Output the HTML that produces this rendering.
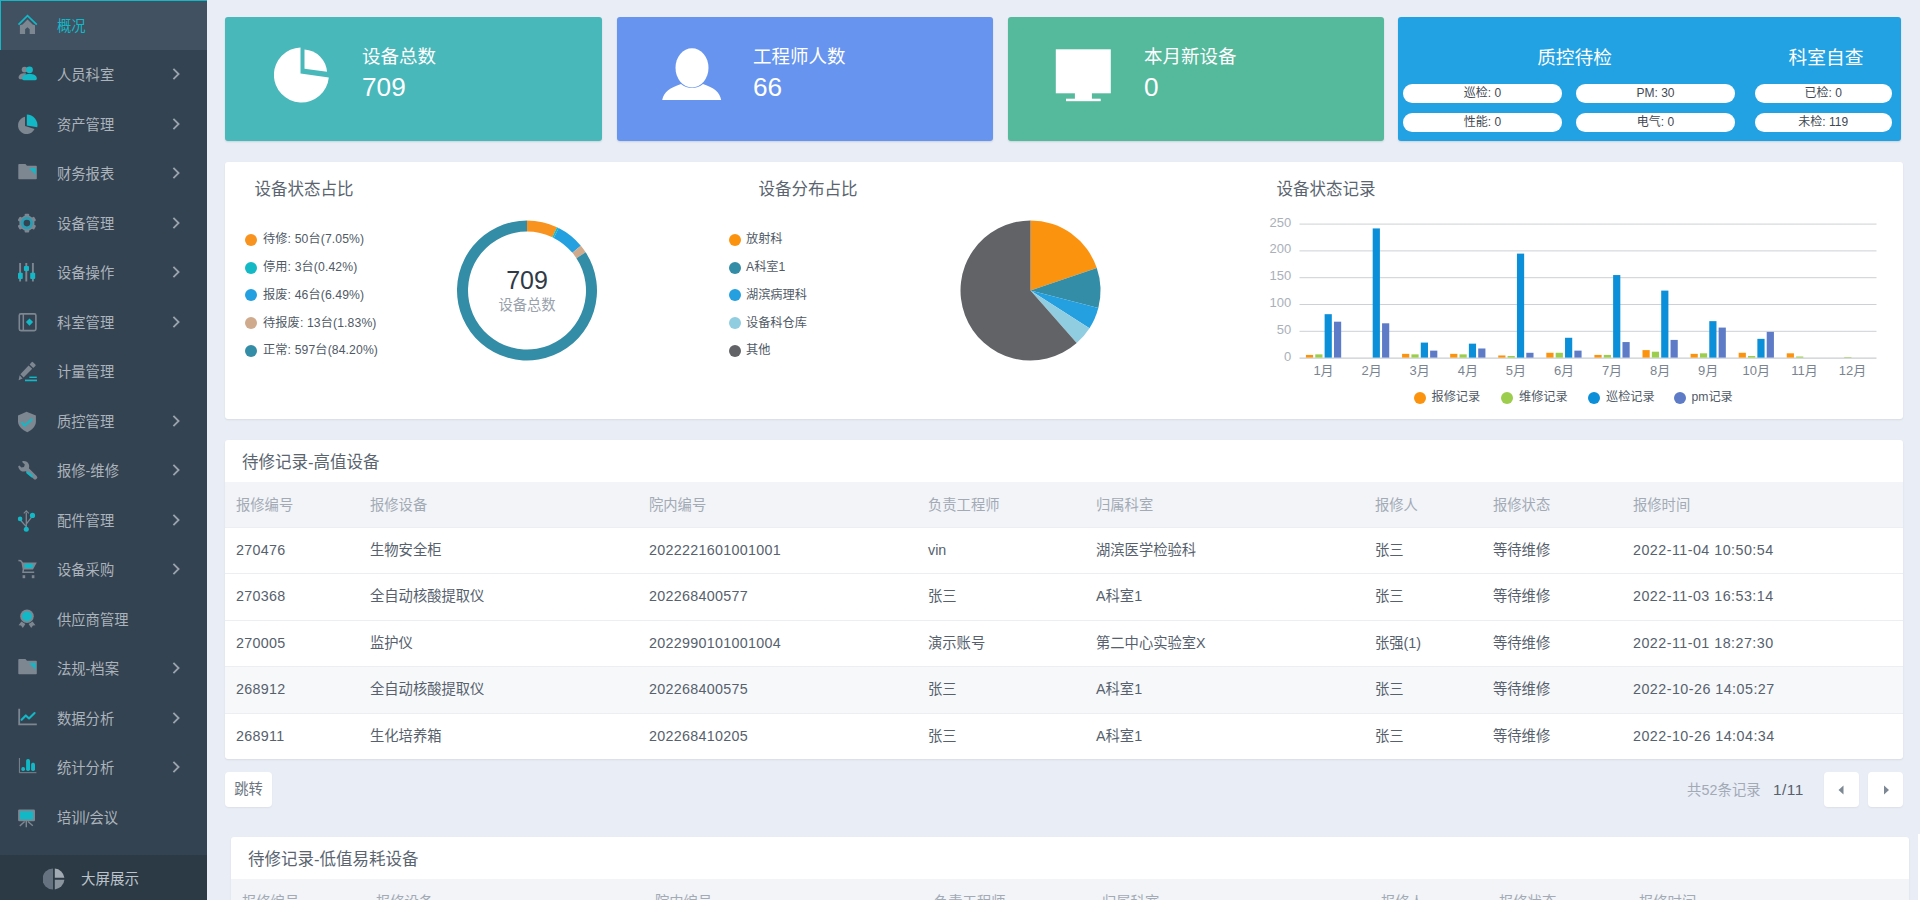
<!DOCTYPE html>
<html lang="zh-CN"><head><meta charset="utf-8"><title>概况</title>
<style>
*{box-sizing:border-box;margin:0;padding:0}
html,body{width:1920px;height:900px;overflow:hidden}
body{background:#e9edf6;font-family:"Liberation Sans","Noto Sans CJK SC",sans-serif;color:#4a5560;position:relative}
#side{position:absolute;left:0;top:0;width:207px;height:900px;background:#344351}
.it{position:absolute;left:0;width:207px;color:#abb3bc;font-size:14.3px;white-space:nowrap}
.it span{position:absolute;left:57px;top:1px}
.it .ic{position:absolute;left:18px;top:14px;overflow:visible}
.it .ar{position:absolute;left:171px;top:50%;margin-top:-7.5px}
.it.act{background:#425161;border-top:1px solid #12b8c6;border-left:1px solid #12b8c6;color:#12b8c6}
.it.act span{left:56px;top:-0.5px}
.it.act .ic{left:17px;top:14px}
#sbot{position:absolute;left:0;top:854.5px;width:207px;height:46px;background:#2c3a45;color:#bcc3ca;font-size:14.5px;line-height:49.4px}
#sbot span{position:absolute;left:81px;top:0}
#sbot svg{position:absolute;left:43.4px;top:13.8px}
.card{position:absolute;top:17px;height:124px;border-radius:3px;color:#fff;box-shadow:0 1px 2px rgba(0,0,0,.12)}
.card .t{position:absolute;left:137px;top:27px;font-size:18.5px;line-height:26px;white-space:nowrap}
.card .n{position:absolute;left:137px;top:53px;font-size:26.2px;line-height:34px}
.panel{position:absolute;background:#fff;border-radius:3px;box-shadow:0 1px 2px rgba(0,0,0,.08)}
.ptitle{position:absolute;font-size:16.5px;color:#5a6570;line-height:22px;white-space:nowrap}
.lg{position:absolute;font-size:12.2px;color:#4f5a66;line-height:16px;white-space:nowrap}
.lgn{letter-spacing:0.12px}
.lg i{position:absolute;left:-18px;top:2.5px;width:12px;height:12px;border-radius:50%}
.ax{font-size:13px;fill:#a9b0b9;font-family:"Liberation Sans","Noto Sans CJK SC",sans-serif}
.ax2{font-size:13px;fill:#7a8490;font-family:"Liberation Sans","Noto Sans CJK SC",sans-serif}
.pill{position:absolute;height:18.5px;border-radius:9.25px;background:#fff;color:#3f4953;font-size:12px;line-height:18px;text-align:center;white-space:nowrap}
.th{position:absolute;left:0;top:42px;width:100%;height:45px;background:#f2f4f7;color:#a2aab6;font-size:14.3px;line-height:47.5px}
.th span,.tr span{position:absolute;top:0;white-space:nowrap}
.tr{position:absolute;left:0;width:100%;height:46.4px;line-height:44px;font-size:14.3px;color:#56616d;border-top:1px solid #eceef2}
.nm{letter-spacing:0.3px}.dt{letter-spacing:0.47px}
.tr.hov{background:#f7f8fa}
.btn{position:absolute;background:#fff;border-radius:4px;box-shadow:0 1px 2px rgba(0,0,0,.06)}
</style></head><body>
<div id="side">
<div class="it act" style="top:0.0px;height:50px;line-height:50px"><svg class="ic" width="22" height="22" viewBox="0 0 22 22"><path d="M4.6 9.6 L9.5 4.6 L14.6 9.6 L17 10.2 V19.1 H11.7 V14.2 L9.4 12.2 L7.1 14.2 V19.1 H1.9 V10.2 Z" fill="#7d8792"/><path d="M0.5 9.6 L9.5 0.6 L18.8 9.6" fill="none" stroke="#12b8c6" stroke-width="1.7" stroke-linejoin="miter"/></svg><span>概况</span></div>
<div class="it" style="top:50.0px;height:49.5px;line-height:49.5px"><svg class="ic" width="22" height="22" viewBox="0 0 22 22"><circle cx="6.6" cy="5.6" r="2.9" fill="#7d8792"/><path d="M0.6 13.6 C0.6 10.6 3.4 9.2 6.6 9.2 L8 9.2 L6 15.2 H2 C1 15.2 0.6 14.4 0.6 13.6 Z" fill="#7d8792"/><circle cx="11.5" cy="5.8" r="3.4" fill="#12b8c6"/><path d="M4.2 14.6 C4.2 11.4 7.4 10 11.5 10 C15.6 10 18.8 11.4 18.8 14.6 C18.8 15.6 18.2 16.2 17.2 16.2 H5.8 C4.8 16.2 4.2 15.6 4.2 14.6 Z" fill="#12b8c6"/></svg><span>人员科室</span><svg class="ar" width="10" height="14" viewBox="0 0 10 14"><path d="M2.4 1.8 L7.6 7 L2.4 12.2" fill="none" stroke="#9aa3ad" stroke-width="1.8"/></svg></div>
<div class="it" style="top:99.5px;height:49.5px;line-height:49.5px"><svg class="ic" width="22" height="22" viewBox="0 0 22 22"><path d="M7 2.87 A8.7 8.7 0 1 0 16.56 15.12 L7 11.9 Z" fill="#7d8792"/><path d="M8.8 0.4 A11 11 0 0 1 19.3 13.3 L8.8 11.5 Z" fill="#12b8c6"/></svg><span>资产管理</span><svg class="ar" width="10" height="14" viewBox="0 0 10 14"><path d="M2.4 1.8 L7.6 7 L2.4 12.2" fill="none" stroke="#9aa3ad" stroke-width="1.8"/></svg></div>
<div class="it" style="top:149.0px;height:49.5px;line-height:49.5px"><svg class="ic" width="22" height="22" viewBox="0 0 22 22"><path d="M1.1 1 H7.4 L9 2.8 H18 Q18.8 2.8 18.8 3.6 V15.4 Q18.8 16.2 18 16.2 H1.1 Q0.3 16.2 0.3 15.4 V1.8 Q0.3 1 1.1 1 Z" fill="#7d8792"/><path d="M11 5 H17.6 V11.4 Z" fill="#12b8c6"/></svg><span>财务报表</span><svg class="ar" width="10" height="14" viewBox="0 0 10 14"><path d="M2.4 1.8 L7.6 7 L2.4 12.2" fill="none" stroke="#9aa3ad" stroke-width="1.8"/></svg></div>
<div class="it" style="top:198.5px;height:49.5px;line-height:49.5px"><svg class="ic" width="22" height="22" viewBox="0 0 22 22"><g transform="translate(8.9 10.1)"><g fill="#7d8792"><rect x="-2.3" y="-9.4" width="4.6" height="18.8" rx="1"/><rect x="-2.3" y="-9.4" width="4.6" height="18.8" rx="1" transform="rotate(60)"/><rect x="-2.3" y="-9.4" width="4.6" height="18.8" rx="1" transform="rotate(120)"/><circle r="7.6"/></g><circle r="6.3" fill="#2b9db3"/><circle r="3.3" fill="#344351"/></g></svg><span>设备管理</span><svg class="ar" width="10" height="14" viewBox="0 0 10 14"><path d="M2.4 1.8 L7.6 7 L2.4 12.2" fill="none" stroke="#9aa3ad" stroke-width="1.8"/></svg></div>
<div class="it" style="top:248.0px;height:49.5px;line-height:49.5px"><svg class="ic" width="22" height="22" viewBox="0 0 22 22"><path d="M2.1 0.9 V19.5 M8.3 0.9 V19.5 M14.9 0.9 V19.5" stroke="#7d8792" stroke-width="1.9" fill="none"/><rect x="0" y="10.8" width="4.8" height="6.1" rx="1" fill="#12b8c6"/><rect x="5.9" y="3.9" width="5.1" height="5.2" rx="1" fill="#12b8c6"/><rect x="12.2" y="10.8" width="5" height="6.1" rx="1" fill="#12b8c6"/></svg><span>设备操作</span><svg class="ar" width="10" height="14" viewBox="0 0 10 14"><path d="M2.4 1.8 L7.6 7 L2.4 12.2" fill="none" stroke="#9aa3ad" stroke-width="1.8"/></svg></div>
<div class="it" style="top:297.5px;height:49.5px;line-height:49.5px"><svg class="ic" width="22" height="22" viewBox="0 0 22 22"><rect x="1.3" y="1.9" width="16.6" height="16.7" rx="1.6" fill="none" stroke="#7d8792" stroke-width="1.6"/><path d="M5.3 1.9 V18.6" stroke="#7d8792" stroke-width="1.5"/><path d="M11.5 6.4 L15.1 10.1 L11.5 13.8 L7.9 10.1 Z" fill="#12b8c6"/></svg><span>科室管理</span><svg class="ar" width="10" height="14" viewBox="0 0 10 14"><path d="M2.4 1.8 L7.6 7 L2.4 12.2" fill="none" stroke="#9aa3ad" stroke-width="1.8"/></svg></div>
<div class="it" style="top:347.0px;height:49.5px;line-height:49.5px"><svg class="ic" width="22" height="22" viewBox="0 0 22 22"><path d="M0.6 19.2 L1.6 14.2 L4.6 17.4 Z" fill="#7d8792"/><path d="M2.4 13.2 L10.6 4.4 L14.2 7.8 L5.6 16.6 Z" fill="#7d8792"/><path d="M11.6 3.4 L13.6 1.2 Q14.3 0.5 15 1.2 L17.4 3.5 Q18 4.2 17.4 4.9 L15.2 7 Z" fill="#7d8792"/><path d="M11.3 16.3 H18.8" stroke="#12b8c6" stroke-width="1.4"/><path d="M7 19.4 H19" stroke="#12b8c6" stroke-width="1.7"/></svg><span>计量管理</span></div>
<div class="it" style="top:396.5px;height:49.5px;line-height:49.5px"><svg class="ic" width="22" height="22" viewBox="0 0 22 22"><path d="M8.6 0.7 L17.9 4.4 V10.6 C17.9 15.2 14.2 19 9.3 21.3 C4.2 19 0 15.2 0 10.6 V4.4 Z" fill="#7d8792"/><path d="M3.4 11.2 L6.6 14.6 L14.4 8" stroke="#12b8c6" stroke-width="2" fill="none"/></svg><span>质控管理</span><svg class="ar" width="10" height="14" viewBox="0 0 10 14"><path d="M2.4 1.8 L7.6 7 L2.4 12.2" fill="none" stroke="#9aa3ad" stroke-width="1.8"/></svg></div>
<div class="it" style="top:446.0px;height:49.5px;line-height:49.5px"><svg class="ic" width="22" height="22" viewBox="0 0 22 22"><path d="M8.6 9 L17.2 17.4" stroke="#7d8792" stroke-width="4.2" stroke-linecap="round"/><path d="M4.2 1.2 C6.8 0.4 9.6 1.6 10.8 4.2 C11.8 6.6 11 9.4 9 10.8 C7 12 4.2 11.8 2.4 10.4 C1.2 9.4 0.4 7.8 0.2 6.2 L1.4 5.4 L3.4 7.6 L6 7 L6.8 4.6 L4.6 2.6 Z" fill="#7d8792"/><path d="M9.4 12.6 L14 16.2" stroke="#12b8c6" stroke-width="2.4" stroke-linecap="round"/></svg><span>报修-维修</span><svg class="ar" width="10" height="14" viewBox="0 0 10 14"><path d="M2.4 1.8 L7.6 7 L2.4 12.2" fill="none" stroke="#9aa3ad" stroke-width="1.8"/></svg></div>
<div class="it" style="top:495.5px;height:49.5px;line-height:49.5px"><svg class="ic" width="22" height="22" viewBox="0 0 22 22"><path d="M8.3 2.5 V17 M2.4 10 L8 16.4 M14.2 6.4 L8.6 13.6" stroke="#7d8792" stroke-width="1.3" fill="none"/><path d="M5.8 3.4 L8.3 0.9 L10.8 3.4" stroke="#7d8792" stroke-width="1.1" fill="none"/><circle cx="2.1" cy="8.9" r="2.3" fill="#12b8c6"/><circle cx="14.5" cy="5.4" r="2.6" fill="#12b8c6"/><circle cx="8.3" cy="19.2" r="2.5" fill="#12b8c6"/></svg><span>配件管理</span><svg class="ar" width="10" height="14" viewBox="0 0 10 14"><path d="M2.4 1.8 L7.6 7 L2.4 12.2" fill="none" stroke="#9aa3ad" stroke-width="1.8"/></svg></div>
<div class="it" style="top:545.0px;height:49.5px;line-height:49.5px"><svg class="ic" width="22" height="22" viewBox="0 0 22 22"><path d="M0.4 1.4 L2.6 1.8 L4.2 3.6 L5.4 10.2 L5 13.2 H16.2" stroke="#7d8792" stroke-width="1.5" fill="none"/><path d="M4.2 3.4 H18.8 L15 10.4 H5.4 Z" fill="#7d8792"/><rect x="6.6" y="4.8" width="8.4" height="4.1" rx="0.8" fill="#12b8c6"/><rect x="4.6" y="16.2" width="2.6" height="3" fill="#7d8792"/><rect x="13.8" y="16.2" width="2.6" height="3" fill="#7d8792"/></svg><span>设备采购</span><svg class="ar" width="10" height="14" viewBox="0 0 10 14"><path d="M2.4 1.8 L7.6 7 L2.4 12.2" fill="none" stroke="#9aa3ad" stroke-width="1.8"/></svg></div>
<div class="it" style="top:594.5px;height:49.5px;line-height:49.5px"><svg class="ic" width="22" height="22" viewBox="0 0 22 22"><path d="M3.4 12.6 L0.6 16.3 L3 16.6 L4.8 18.9 L7.4 15 Z" fill="#7d8792"/><path d="M14.6 12.6 L17.4 16.3 L15 16.6 L13.2 18.9 L10.6 15 Z" fill="#7d8792"/><circle cx="9" cy="7.3" r="6.8" fill="#7d8792"/><circle cx="9" cy="7.3" r="4.9" fill="#12b8c6"/></svg><span>供应商管理</span></div>
<div class="it" style="top:644.0px;height:49.5px;line-height:49.5px"><svg class="ic" width="22" height="22" viewBox="0 0 22 22"><path d="M1.1 1 H7.4 L9 2.8 H18 Q18.8 2.8 18.8 3.6 V15.4 Q18.8 16.2 18 16.2 H1.1 Q0.3 16.2 0.3 15.4 V1.8 Q0.3 1 1.1 1 Z" fill="#7d8792"/><path d="M11 5 H17.6 V11.4 Z" fill="#12b8c6"/></svg><span>法规-档案</span><svg class="ar" width="10" height="14" viewBox="0 0 10 14"><path d="M2.4 1.8 L7.6 7 L2.4 12.2" fill="none" stroke="#9aa3ad" stroke-width="1.8"/></svg></div>
<div class="it" style="top:693.5px;height:49.5px;line-height:49.5px"><svg class="ic" width="22" height="22" viewBox="0 0 22 22"><path d="M1.2 0.7 V16.3 H18.8" stroke="#7d8792" stroke-width="1.8" fill="none"/><path d="M3.6 11.8 L7.8 7.4 L11 10.4 L16.6 5" stroke="#12b8c6" stroke-width="2.1" fill="none" stroke-linecap="round" stroke-linejoin="round"/></svg><span>数据分析</span><svg class="ar" width="10" height="14" viewBox="0 0 10 14"><path d="M2.4 1.8 L7.6 7 L2.4 12.2" fill="none" stroke="#9aa3ad" stroke-width="1.8"/></svg></div>
<div class="it" style="top:743.0px;height:49.5px;line-height:49.5px"><svg class="ic" width="22" height="22" viewBox="0 0 22 22"><path d="M1.4 1 V15.7 H18.4" stroke="#7d8792" stroke-width="1" fill="none"/><rect x="3.3" y="10.1" width="3.7" height="3.8" rx="1.6" fill="#12b8c6"/><rect x="8.1" y="2.1" width="3.9" height="11.8" rx="1.7" fill="#12b8c6"/><rect x="13.1" y="5.7" width="3.9" height="8.2" rx="1.7" fill="#12b8c6"/></svg><span>统计分析</span><svg class="ar" width="10" height="14" viewBox="0 0 10 14"><path d="M2.4 1.8 L7.6 7 L2.4 12.2" fill="none" stroke="#9aa3ad" stroke-width="1.8"/></svg></div>
<div class="it" style="top:792.5px;height:49.5px;line-height:49.5px"><svg class="ic" width="22" height="22" viewBox="0 0 22 22"><rect x="0.1" y="2.5" width="16.9" height="11.7" rx="1.2" fill="#7d8792"/><rect x="1.9" y="4.3" width="13.3" height="8.3" rx="0.8" fill="#12b8c6"/><path d="M8.3 14 V20.2 M6.6 14.4 L1.8 19 M10 14.4 L14.8 18.8" stroke="#7d8792" stroke-width="1.4" fill="none"/></svg><span>培训/会议</span></div>
<div id="sbot"><svg width="22" height="22" viewBox="0 0 22 22"><path d="M10 0.5 A10.5 10.5 0 0 0 10 21.5 Z" fill="#66727f"/><path d="M11.8 0.6 A10.5 10.5 0 0 1 21.4 9.8 H11.8 Z" fill="#a2aab3"/><path d="M11.8 11.8 H21.4 A10.5 10.5 0 0 1 11.8 21.4 Z" fill="#8a949f"/></svg><span>大屏展示</span></div>
</div>

<div class="card" style="left:225px;width:376.5px;background:#48b8ba">
<svg style="position:absolute;left:49px;top:28.5px" width="58" height="58" viewBox="0 0 58 58"><path d="M26.5 1.5 A27.5 27.5 0 1 0 54.8 31.5 L26.5 27.5 Z" fill="#fff"/><path d="M30.5 3.5 A24 24 0 0 1 53 25.8 L30.5 22.8 Z" fill="#fff"/></svg>
<div class="t">设备总数</div><div class="n">709</div></div>

<div class="card" style="left:617px;width:375.5px;background:#6794ee">
<svg style="position:absolute;left:43.5px;top:30px" width="62" height="54" viewBox="0 0 62 54"><ellipse cx="31" cy="20.8" rx="16.5" ry="19.6" fill="#fff"/><path d="M1.2 53 C3 44.5 9 41 20 37 C26 42.3 36 42.3 42 37 C53 41 58.5 44.5 60.2 53 Z" fill="#fff"/></svg>
<div class="t" style="left:136px">工程师人数</div><div class="n" style="left:136px">66</div></div>

<div class="card" style="left:1008px;width:375.5px;background:#55b99c">
<svg style="position:absolute;left:47px;top:31px" width="58" height="54" viewBox="0 0 58 54"><rect x="0.8" y="1.3" width="55" height="44" fill="#fff"/><rect x="19.9" y="45" width="17" height="6" fill="#fff"/><rect x="11" y="50.7" width="34.7" height="2.5" fill="#fff"/></svg>
<div class="t" style="left:136px">本月新设备</div><div class="n" style="left:136px">0</div></div>

<div class="card" style="left:1398px;width:503px;background:#22a2e3">
<div style="position:absolute;left:139.2px;top:28px;font-size:18.7px;line-height:26px">质控待检</div>
<div style="position:absolute;left:390.6px;top:28px;font-size:18.7px;line-height:26px">科室自查</div>
<div class="pill" style="left:5px;top:67px;width:159px">巡检: 0</div>
<div class="pill" style="left:178px;top:67px;width:159px">PM: 30</div>
<div class="pill" style="left:357px;top:67px;width:136.5px">已检: 0</div>
<div class="pill" style="left:5px;top:96px;width:159px">性能: 0</div>
<div class="pill" style="left:178px;top:96px;width:159px">电气: 0</div>
<div class="pill" style="left:357px;top:96px;width:136.5px">未检: 119</div>
</div>

<div class="panel" style="left:225px;top:162px;width:1678px;height:257px"></div>
<div class="ptitle" style="left:254.5px;top:178px">设备状态占比</div>
<div class="ptitle" style="left:758.5px;top:178px">设备分布占比</div>
<div class="ptitle" style="left:1276.5px;top:178px">设备状态记录</div>

<div class="lg lgn" style="left:263px;top:231px"><i style="background:#f7931e"></i>待修: 50台(7.05%)</div>
<div class="lg lgn" style="left:263px;top:259px"><i style="background:#13b9c4"></i>停用: 3台(0.42%)</div>
<div class="lg lgn" style="left:263px;top:286.5px"><i style="background:#24a0e0"></i>报废: 46台(6.49%)</div>
<div class="lg lgn" style="left:263px;top:314.5px"><i style="background:#d0aa8c"></i>待报废: 13台(1.83%)</div>
<div class="lg lgn" style="left:263px;top:342px"><i style="background:#348da6"></i>正常: 597台(84.20%)</div>

<div class="lg" style="left:746px;top:231px"><i style="left:-17px;background:#fc930f"></i>放射科</div>
<div class="lg" style="left:746px;top:259px"><i style="left:-17px;background:#348da6"></i>A科室1</div>
<div class="lg" style="left:746px;top:286.5px"><i style="left:-17px;background:#24a0e0"></i>湖滨病理科</div>
<div class="lg" style="left:746px;top:314.5px"><i style="left:-17px;background:#90cde0"></i>设备科仓库</div>
<div class="lg" style="left:746px;top:342px"><i style="left:-17px;background:#626366"></i>其他</div>

<svg style="position:absolute;left:0;top:0;pointer-events:none" width="1920" height="900" viewBox="0 0 1920 900">
<path d="M527.00,220.50 A70,70 0 0 1 557.01,227.26 L552.30,237.20 A59,59 0 0 0 527.00,231.50 Z" fill="#f7931e"/><path d="M557.01,227.26 A70,70 0 0 1 558.68,228.08 L553.70,237.89 A59,59 0 0 0 552.30,237.20 Z" fill="#13b9c4"/><path d="M558.68,228.08 A70,70 0 0 1 580.83,245.76 L572.37,252.79 A59,59 0 0 0 553.70,237.89 Z" fill="#24a0e0"/><path d="M580.83,245.76 A70,70 0 0 1 585.62,252.24 L576.41,258.25 A59,59 0 0 0 572.37,252.79 Z" fill="#d0aa8c"/><path d="M585.62,252.24 A70,70 0 1 1 527.00,220.50 L527.00,231.50 A59,59 0 1 0 576.41,258.25 Z" fill="#348da6"/>
<path d="M1030.50,290.50 L1030.50,220.50 A70,70 0 0 1 1096.80,268.06 Z" fill="#fc930f"/><path d="M1030.50,290.50 L1096.80,268.06 A70,70 0 0 1 1098.30,307.91 Z" fill="#348da6"/><path d="M1030.50,290.50 L1098.30,307.91 A70,70 0 0 1 1089.47,328.21 Z" fill="#24a0e0"/><path d="M1030.50,290.50 L1089.47,328.21 A70,70 0 0 1 1076.70,343.09 Z" fill="#90cde0"/><path d="M1030.50,290.50 L1076.70,343.09 A70,70 0 1 1 1030.50,220.50 Z" fill="#626366"/>
<line x1="1299.5" x2="1876.5" y1="358.1" y2="358.1" stroke="#bcc1c7" stroke-width="1"/><text x="1291.3" y="360.6" text-anchor="end" class="ax">0</text><line x1="1299.5" x2="1876.5" y1="331.3" y2="331.3" stroke="#cdd0d4" stroke-width="1"/><text x="1291.3" y="333.8" text-anchor="end" class="ax">50</text><line x1="1299.5" x2="1876.5" y1="304.5" y2="304.5" stroke="#cdd0d4" stroke-width="1"/><text x="1291.3" y="307.0" text-anchor="end" class="ax">100</text><line x1="1299.5" x2="1876.5" y1="277.7" y2="277.7" stroke="#cdd0d4" stroke-width="1"/><text x="1291.3" y="280.2" text-anchor="end" class="ax">150</text><line x1="1299.5" x2="1876.5" y1="250.9" y2="250.9" stroke="#cdd0d4" stroke-width="1"/><text x="1291.3" y="253.4" text-anchor="end" class="ax">200</text><line x1="1299.5" x2="1876.5" y1="224.1" y2="224.1" stroke="#cdd0d4" stroke-width="1"/><text x="1291.3" y="226.6" text-anchor="end" class="ax">250</text><text x="1323.5" y="375.2" text-anchor="middle" class="ax2">1月</text><text x="1371.6" y="375.2" text-anchor="middle" class="ax2">2月</text><text x="1419.7" y="375.2" text-anchor="middle" class="ax2">3月</text><text x="1467.8" y="375.2" text-anchor="middle" class="ax2">4月</text><text x="1515.9" y="375.2" text-anchor="middle" class="ax2">5月</text><text x="1564.0" y="375.2" text-anchor="middle" class="ax2">6月</text><text x="1612.0" y="375.2" text-anchor="middle" class="ax2">7月</text><text x="1660.1" y="375.2" text-anchor="middle" class="ax2">8月</text><text x="1708.2" y="375.2" text-anchor="middle" class="ax2">9月</text><text x="1756.3" y="375.2" text-anchor="middle" class="ax2">10月</text><text x="1804.4" y="375.2" text-anchor="middle" class="ax2">11月</text><text x="1852.5" y="375.2" text-anchor="middle" class="ax2">12月</text><rect x="1305.92" y="354.92" width="7.2" height="2.68" fill="#fc930f"/><rect x="1315.27" y="354.38" width="7.2" height="3.22" fill="#9ccd4c"/><rect x="1324.62" y="314.18" width="7.2" height="43.42" fill="#0b8fd8"/><rect x="1333.97" y="321.69" width="7.2" height="35.91" fill="#5d7bc7"/><rect x="1372.70" y="228.42" width="7.2" height="129.18" fill="#0b8fd8"/><rect x="1382.05" y="323.30" width="7.2" height="34.30" fill="#5d7bc7"/><rect x="1402.08" y="353.85" width="7.2" height="3.75" fill="#fc930f"/><rect x="1411.43" y="354.38" width="7.2" height="3.22" fill="#9ccd4c"/><rect x="1420.78" y="342.59" width="7.2" height="15.01" fill="#0b8fd8"/><rect x="1430.13" y="350.63" width="7.2" height="6.97" fill="#5d7bc7"/><rect x="1450.17" y="353.85" width="7.2" height="3.75" fill="#fc930f"/><rect x="1459.52" y="354.38" width="7.2" height="3.22" fill="#9ccd4c"/><rect x="1468.87" y="343.66" width="7.2" height="13.94" fill="#0b8fd8"/><rect x="1478.22" y="348.49" width="7.2" height="9.11" fill="#5d7bc7"/><rect x="1498.25" y="355.46" width="7.2" height="2.14" fill="#fc930f"/><rect x="1507.60" y="355.99" width="7.2" height="1.61" fill="#9ccd4c"/><rect x="1516.95" y="253.62" width="7.2" height="103.98" fill="#0b8fd8"/><rect x="1526.30" y="352.78" width="7.2" height="4.82" fill="#5d7bc7"/><rect x="1546.33" y="352.78" width="7.2" height="4.82" fill="#fc930f"/><rect x="1555.68" y="352.78" width="7.2" height="4.82" fill="#9ccd4c"/><rect x="1565.03" y="337.77" width="7.2" height="19.83" fill="#0b8fd8"/><rect x="1574.38" y="350.63" width="7.2" height="6.97" fill="#5d7bc7"/><rect x="1594.42" y="354.92" width="7.2" height="2.68" fill="#fc930f"/><rect x="1603.77" y="354.92" width="7.2" height="2.68" fill="#9ccd4c"/><rect x="1613.12" y="275.06" width="7.2" height="82.54" fill="#0b8fd8"/><rect x="1622.47" y="342.06" width="7.2" height="15.54" fill="#5d7bc7"/><rect x="1642.50" y="350.10" width="7.2" height="7.50" fill="#fc930f"/><rect x="1651.85" y="351.70" width="7.2" height="5.90" fill="#9ccd4c"/><rect x="1661.20" y="290.60" width="7.2" height="67.00" fill="#0b8fd8"/><rect x="1670.55" y="339.91" width="7.2" height="17.69" fill="#5d7bc7"/><rect x="1690.58" y="353.85" width="7.2" height="3.75" fill="#fc930f"/><rect x="1699.93" y="353.31" width="7.2" height="4.29" fill="#9ccd4c"/><rect x="1709.28" y="321.15" width="7.2" height="36.45" fill="#0b8fd8"/><rect x="1718.63" y="327.58" width="7.2" height="30.02" fill="#5d7bc7"/><rect x="1738.67" y="352.78" width="7.2" height="4.82" fill="#fc930f"/><rect x="1748.02" y="355.99" width="7.2" height="1.61" fill="#9ccd4c"/><rect x="1757.37" y="338.84" width="7.2" height="18.76" fill="#0b8fd8"/><rect x="1766.72" y="331.87" width="7.2" height="25.73" fill="#5d7bc7"/><rect x="1786.75" y="353.31" width="7.2" height="4.29" fill="#fc930f"/><rect x="1796.10" y="356.53" width="7.2" height="1.07" fill="#9ccd4c"/><rect x="1844.18" y="357.06" width="7.2" height="0.54" fill="#9ccd4c"/>
</svg>
<div style="position:absolute;left:467px;top:263px;width:120px;text-align:center;font-size:25px;line-height:34px;color:#2f3a46">709</div>
<div style="position:absolute;left:467px;top:295.5px;width:120px;text-align:center;font-size:14.3px;line-height:18px;color:#98a1ac">设备总数</div>

<div class="lg" style="left:1431.5px;top:389px"><i style="left:-17.5px;background:#fc930f"></i>报修记录</div>
<div class="lg" style="left:1519px;top:389px"><i style="left:-18px;background:#9ccd4c"></i>维修记录</div>
<div class="lg" style="left:1606px;top:389px"><i style="left:-18px;background:#0b8fd8"></i>巡检记录</div>
<div class="lg" style="left:1691.5px;top:389px"><i style="left:-17.5px;background:#5d7bc7"></i>pm记录</div>

<div class="panel" style="left:225px;top:440px;width:1678px;height:318.5px;overflow:hidden">
<div class="ptitle" style="left:17px;top:11.2px">待修记录-高值设备</div>
<div class="th"><span style="left:11px">报修编号</span><span style="left:145px">报修设备</span><span style="left:424px">院内编号</span><span style="left:703px">负责工程师</span><span style="left:871px">归属科室</span><span style="left:1150px">报修人</span><span style="left:1268px">报修状态</span><span style="left:1408px">报修时间</span></div>
<div class="tr" style="top:87.0px"><span class="nm" style="left:11px">270476</span><span style="left:145px">生物安全柜</span><span class="nm" style="left:424px">2022221601001001</span><span style="left:703px">vin</span><span style="left:871px">湖滨医学检验科</span><span style="left:1150px">张三</span><span style="left:1268px">等待维修</span><span class="dt" style="left:1408px">2022-11-04 10:50:54</span></div><div class="tr" style="top:133.4px"><span class="nm" style="left:11px">270368</span><span style="left:145px">全自动核酸提取仪</span><span class="nm" style="left:424px">202268400577</span><span style="left:703px">张三</span><span style="left:871px">A科室1</span><span style="left:1150px">张三</span><span style="left:1268px">等待维修</span><span class="dt" style="left:1408px">2022-11-03 16:53:14</span></div><div class="tr" style="top:179.8px"><span class="nm" style="left:11px">270005</span><span style="left:145px">监护仪</span><span class="nm" style="left:424px">2022990101001004</span><span style="left:703px">演示账号</span><span style="left:871px">第二中心实验室X</span><span style="left:1150px">张强(1)</span><span style="left:1268px">等待维修</span><span class="dt" style="left:1408px">2022-11-01 18:27:30</span></div><div class="tr hov" style="top:226.2px"><span class="nm" style="left:11px">268912</span><span style="left:145px">全自动核酸提取仪</span><span class="nm" style="left:424px">202268400575</span><span style="left:703px">张三</span><span style="left:871px">A科室1</span><span style="left:1150px">张三</span><span style="left:1268px">等待维修</span><span class="dt" style="left:1408px">2022-10-26 14:05:27</span></div><div class="tr" style="top:272.6px"><span class="nm" style="left:11px">268911</span><span style="left:145px">生化培养箱</span><span class="nm" style="left:424px">202268410205</span><span style="left:703px">张三</span><span style="left:871px">A科室1</span><span style="left:1150px">张三</span><span style="left:1268px">等待维修</span><span class="dt" style="left:1408px">2022-10-26 14:04:34</span></div>
</div>

<div class="btn" style="left:225px;top:772px;width:47px;height:35px;font-size:14.3px;line-height:35px;text-align:center;color:#6a7480">跳转</div>
<div style="position:absolute;left:1687px;top:780px;font-size:14.3px;line-height:20px;color:#a2aab6;white-space:nowrap;letter-spacing:0.1px">共52条记录</div>
<div style="position:absolute;left:1773px;top:780px;font-size:15.4px;line-height:20px;color:#56616d;white-space:nowrap;letter-spacing:0.5px">1/11</div>
<div class="btn" style="left:1824px;top:772px;width:35px;height:35px"><svg width="35" height="35"><path d="M19.5 13.5 V22.5 L14.5 18 Z" fill="#7d8894"/></svg></div>
<div class="btn" style="left:1868px;top:772px;width:35px;height:35px"><svg width="35" height="35"><path d="M16 13.5 V22.5 L21 18 Z" fill="#7d8894"/></svg></div>

<div class="panel" style="left:231px;top:837px;width:1678px;height:80px;overflow:hidden">
<div class="ptitle" style="left:17px;top:11.2px">待修记录-低值易耗设备</div>
<div class="th" style="top:41.5px"><span style="left:11px">报修编号</span><span style="left:145px">报修设备</span><span style="left:424px">院内编号</span><span style="left:703px">负责工程师</span><span style="left:871px">归属科室</span><span style="left:1150px">报修人</span><span style="left:1268px">报修状态</span><span style="left:1408px">报修时间</span></div>
</div>
<div style="position:absolute;left:1918px;top:834px;width:2px;height:66px;background:#fff"></div>
</body></html>
